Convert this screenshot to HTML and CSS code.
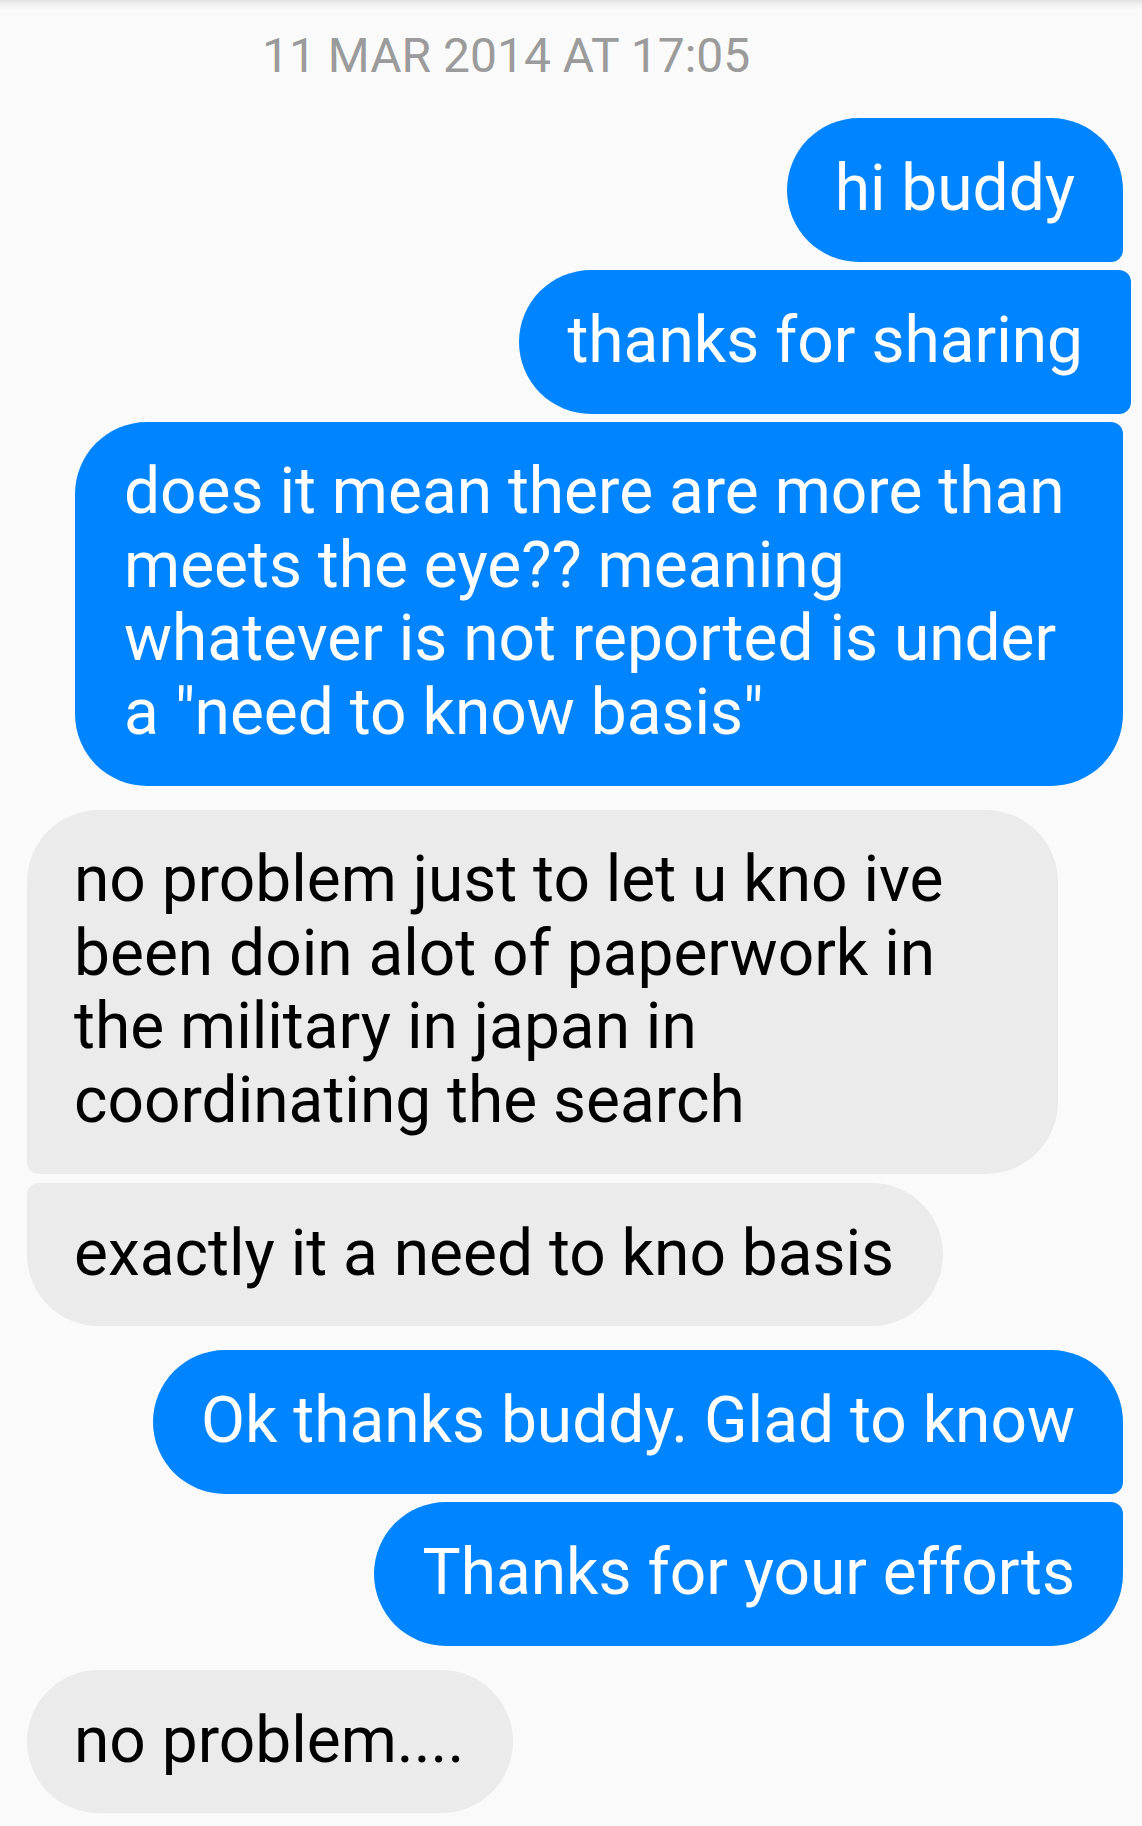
FILE: index.html
```html
<!DOCTYPE html>
<html lang="en">
<head>
<meta charset="utf-8">
<title>Conversation</title>
<link rel="stylesheet" href="styles.css">
</head>
<body>
<main class="thread">
  <div class="stamp">11 MAR 2014 AT 17:05</div>

  <div class="group out first-group">
    <div class="bubble first">hi buddy</div>
    <div class="bubble mid shifted">thanks for sharing</div>
    <div class="bubble last multi">does it mean there are more than meets the eye?? meaning whatever is not reported is under a "need to know basis"</div>
  </div>

  <div class="group in">
    <div class="bubble first multi">no problem just to let u kno ive been doin alot of paperwork in the military in japan in coordinating the search</div>
    <div class="bubble last">exactly it a need to kno basis</div>
  </div>

  <div class="group out">
    <div class="bubble first">Ok thanks buddy. Glad to know</div>
    <div class="bubble last">Thanks for your efforts</div>
  </div>

  <div class="group in">
    <div class="bubble single">no problem....</div>
  </div>
</main>
</body>
</html>
```

FILE: styles.css
```css
html, body {
  margin: 0;
  padding: 0;
}

body {
  width: 1142px;
  min-height: 1826px;
  background-color: #fafafa;
  background-image: linear-gradient(to bottom, #e2e2e2 0px, #f1f1f1 4px, #fafafa 10px);
  background-repeat: no-repeat;
  background-size: 100% 12px;
  font-family: Roboto, "Noto Sans", "Liberation Sans", sans-serif;
  -webkit-font-smoothing: antialiased;
}

.thread {
  display: flex;
  flex-direction: column;
  padding: 28px 0 0 0;
}

.stamp {
  font-size: 48px;
  line-height: 56px;
  color: #9b9b9b;
  padding-left: 262px;
  white-space: nowrap;
}

.group {
  display: flex;
  flex-direction: column;
  gap: 8.5px;
  margin-top: 24px;
}

.group.first-group {
  margin-top: 34px;
}

.group.out {
  align-items: flex-end;
  padding-right: 19px;
}

.group.in {
  align-items: flex-start;
  padding-left: 27px;
}

.bubble {
  box-sizing: border-box;
  font-size: 64px;
  line-height: 73.5px;
  padding: 34px 48px 36px 48px;
  border-radius: 72px;
}

.out .bubble {
  background: #0084ff;
  color: #ffffff;
  max-width: 1048px;
}

.in .bubble {
  background: #ebebeb;
  color: #000000;
  max-width: 1031px;
  padding-left: 47px;
  padding-right: 49px;
}

.out .bubble.first { border-radius: 72px 72px 12px 72px; }
.out .bubble.mid   { border-radius: 72px 12px 12px 72px; }
.out .bubble.last  { border-radius: 72px 12px 72px 72px; }

.in .bubble.first  { border-radius: 72px 72px 72px 12px; }
.in .bubble.last   { border-radius: 12px 72px 72px 72px; }
.in .bubble.single { border-radius: 72px; }

.bubble.shifted {
  margin-right: -8px;
}

.out .bubble.multi {
  padding-left: 49px;
}

.bubble.multi {
  padding-top: 33px;
  padding-bottom: 37px;
}
```
